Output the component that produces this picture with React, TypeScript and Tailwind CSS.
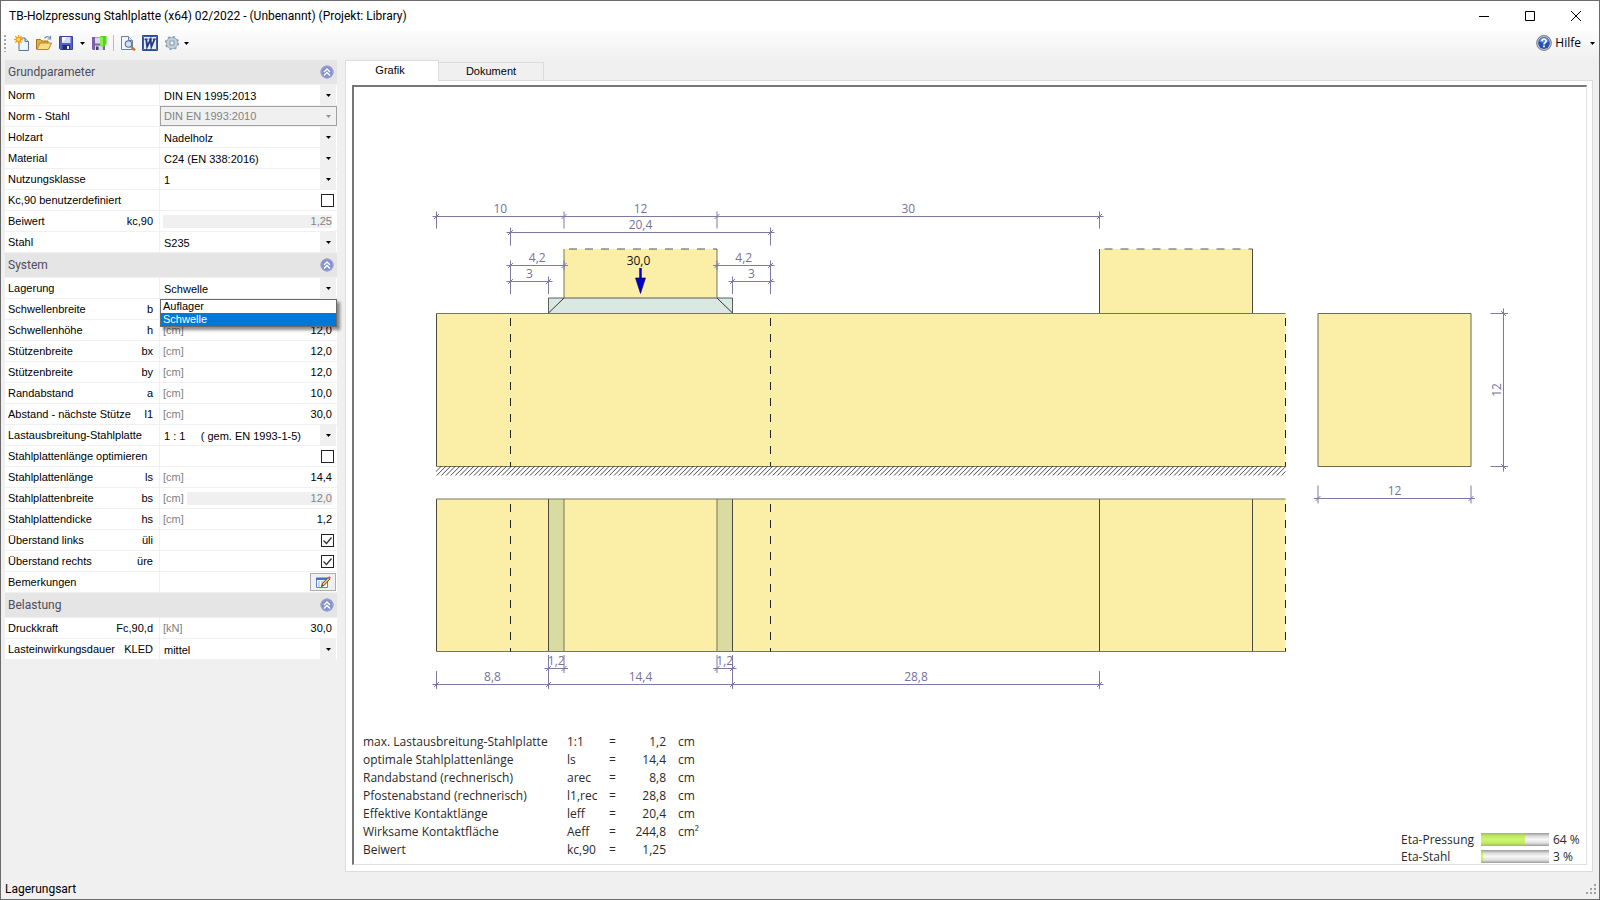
import { useState, type ReactNode } from "react";

type Field = {
  id: string;
  label: string;
  symbol?: string;
  unit?: string;
  kind: "select" | "check" | "number" | "note";
  value?: string;
  options?: string[];
  checked?: boolean;
  disabled?: boolean;
  open?: boolean;
};

type Section = { title: string; fields: Field[] };

const SECTIONS: Section[] = [
  {
    title: "Grundparameter",
    fields: [
      { id: "norm", label: "Norm", kind: "select", value: "DIN EN 1995:2013" },
      { id: "norm-stahl", label: "Norm - Stahl", kind: "select", value: "DIN EN 1993:2010", disabled: true },
      { id: "holzart", label: "Holzart", kind: "select", value: "Nadelholz" },
      { id: "material", label: "Material", kind: "select", value: "C24 (EN 338:2016)" },
      { id: "nutzung", label: "Nutzungsklasse", kind: "select", value: "1" },
      { id: "kc-user", label: "Kc,90 benutzerdefiniert", kind: "check" },
      { id: "beiwert", label: "Beiwert", symbol: "kc,90", kind: "number", value: "1,25", disabled: true },
      { id: "stahl", label: "Stahl", kind: "select", value: "S235" },
    ],
  },
  {
    title: "System",
    fields: [
      { id: "lagerung", label: "Lagerung", kind: "select", value: "Schwelle", options: ["Auflager", "Schwelle"], open: true },
      { id: "b", label: "Schwellenbreite", symbol: "b", unit: "[cm]", kind: "number", value: "12,0" },
      { id: "h", label: "Schwellenhöhe", symbol: "h", unit: "[cm]", kind: "number", value: "12,0" },
      { id: "bx", label: "Stützenbreite", symbol: "bx", unit: "[cm]", kind: "number", value: "12,0" },
      { id: "by", label: "Stützenbreite", symbol: "by", unit: "[cm]", kind: "number", value: "12,0" },
      { id: "a", label: "Randabstand", symbol: "a", unit: "[cm]", kind: "number", value: "10,0" },
      { id: "l1", label: "Abstand - nächste Stütze", symbol: "l1", unit: "[cm]", kind: "number", value: "30,0" },
      { id: "last", label: "Lastausbreitung-Stahlplatte", kind: "select", value: "1 : 1\u00a0\u00a0\u00a0\u00a0 ( gem. EN 1993-1-5)" },
      { id: "opt", label: "Stahlplattenlänge optimieren", kind: "check" },
      { id: "ls", label: "Stahlplattenlänge", symbol: "ls", unit: "[cm]", kind: "number", value: "14,4" },
      { id: "bs", label: "Stahlplattenbreite", symbol: "bs", unit: "[cm]", kind: "number", value: "12,0", disabled: true },
      { id: "hs", label: "Stahlplattendicke", symbol: "hs", unit: "[cm]", kind: "number", value: "1,2" },
      { id: "ueli", label: "Überstand links", symbol: "üli", kind: "check", checked: true },
      { id: "uere", label: "Überstand rechts", symbol: "üre", kind: "check", checked: true },
      { id: "bem", label: "Bemerkungen", kind: "note" },
    ],
  },
  {
    title: "Belastung",
    fields: [
      { id: "druck", label: "Druckkraft", symbol: "Fc,90,d", unit: "[kN]", kind: "number", value: "30,0" },
      { id: "kled", label: "Lasteinwirkungsdauer", symbol: "KLED", kind: "select", value: "mittel" },
    ],
  },
];

const RESULTS = [
  ["max. Lastausbreitung-Stahlplatte", "1:1", "1,2", "cm"],
  ["optimale Stahlplattenlänge", "ls", "14,4", "cm"],
  ["Randabstand (rechnerisch)", "arec", "8,8", "cm"],
  ["Pfostenabstand (rechnerisch)", "l1,rec", "28,8", "cm"],
  ["Effektive Kontaktlänge", "leff", "20,4", "cm"],
  ["Wirksame Kontaktfläche", "Aeff", "244,8", "cm²"],
  ["Beiwert", "kc,90", "1,25", ""],
];

function Caret({ className = "fill-black" }: { className?: string }) {
  return (
    <svg viewBox="0 0 5 3" className={"h-[3px] w-[5px] " + className} aria-hidden="true">
      <path d="M0 0h5L2.500 3z" />
    </svg>
  );
}

function SectionChevron() {
  return (
    <svg viewBox="0 0 14 14" className="size-3.5" aria-hidden="true">
      <circle cx="7" cy="7" r="6.500" fill="#8793cb" />
      <circle cx="7" cy="7" r="6" fill="none" stroke="#9aa4d6" />
      <path d="M4 7l3-3 3 3M4 10.500l3-3 3 3" fill="none" stroke="#fff" strokeWidth="1.400" />
    </svg>
  );
}

function NewIcon() {
  return (
    <svg viewBox="0 0 16 16" className="size-4" aria-hidden="true">
      <path d="M5 3h6l3.500 3.500v9H5z" fill="#eef4fc" stroke="#5d7496" />
      <path d="M11 3v3.500h3.500" fill="#cbd9ee" stroke="#5d7496" />
      <path d="M4.500 0v9M0 4.500h9M1.300 1.300l6.400 6.400M7.700 1.300L1.300 7.700" stroke="#f0a31c" strokeWidth="1.300" />
      <circle cx="4.500" cy="4.500" r="2.200" fill="#ffe14a" stroke="#e78a12" strokeWidth=".8" />
    </svg>
  );
}

function OpenIcon() {
  return (
    <svg viewBox="0 0 16 16" className="size-4" aria-hidden="true">
      <path d="M.5 14V4.500h4l1.500 1.500h6V14z" fill="#e2ad43" stroke="#a8761c" />
      <path d="M.8 14.500L4 8h11.500l-3 6.500z" fill="#fbdc84" stroke="#b5852c" />
      <path d="M8.500 3.500c1.500-2.300 4-2.300 5.500-.5M14.500.8V4h-3" fill="none" stroke="#7590b8" strokeWidth="1.200" />
    </svg>
  );
}

function SaveIcon() {
  return (
    <svg viewBox="0 0 16 16" className="size-4" aria-hidden="true">
      <path d="M1.500 1.500h13v13h-12l-1-1z" fill="#5660c4" stroke="#3a439c" />
      <path d="M4 2h8.500v6H4z" fill="#cfdcf4" />
      <path d="M4 2h5l-5 6z" fill="#fff" />
      <path d="M4.500 10h7.500v4.500H4.500z" fill="#252c66" />
      <path d="M9 11h2v3H9z" fill="#eef1fa" />
    </svg>
  );
}

function SaveCloseIcon() {
  return (
    <svg viewBox="0 0 16 16" className="size-4" aria-hidden="true">
      <path d="M1 2h13v13H2l-1-1z" fill="#7b61a8" />
      <path d="M4 2.500h7v6H4z" fill="#dcd9ee" />
      <path d="M4 10.500h8V15H4z" fill="#d9dbe2" />
      <path d="M5 11.500h2.500V15H5z" fill="#493b6c" />
      <path d="M9 1h6.500v8L12 12.500 9 10z" fill="#53d322" />
      <path d="M9 1l3 2v9.500L9 10z" fill="#8aef46" />
    </svg>
  );
}

function PreviewIcon() {
  return (
    <svg viewBox="0 0 16 16" className="size-4" aria-hidden="true">
      <path d="M1.500 1.500h7l4 4v9h-11z" fill="#f3f7fd" stroke="#6b83a8" />
      <path d="M8.500 1.500v4h4" fill="#d3dff1" stroke="#6b83a8" />
      <path d="M11.500 12l3.500 3.300" stroke="#b8762c" strokeWidth="2.400" />
      <circle cx="8.500" cy="9" r="3.300" fill="#c8e2f6" stroke="#5d6c82" strokeWidth="1.100" />
    </svg>
  );
}

function WordIcon() {
  return (
    <svg viewBox="0 0 16 16" className="size-4" aria-hidden="true">
      <path d="M.5.5h15v15H.5z" fill="#fff" stroke="#2b4a87" />
      <path d="M1.500 1.500h13v13h-13z" fill="#e6edf8" stroke="#3a5ea3" />
      <path d="M2.500 4.200h3.200M6.700 4.200h3M10.800 4.200h3" stroke="#1f3f80" strokeWidth="1.300" />
      <path d="M4.200 4l.9 7.600L8.600 4.500l.8 7.100L12.600 4" fill="none" stroke="#1f3f80" strokeWidth="1.900" />
    </svg>
  );
}

function GearIcon() {
  return (
    <svg viewBox="0 0 16 16" className="size-4" aria-hidden="true">
      <circle cx="8" cy="8" r="6.200" fill="none" stroke="#8ea0b2" strokeWidth="1.800" strokeDasharray="2.430 2.430" />
      <circle cx="8" cy="8" r="4.200" fill="none" stroke="#8fa2b5" strokeWidth="3.600" />
      <circle cx="8" cy="8" r="4.200" fill="none" stroke="#c3d1de" strokeWidth="2.200" />
      <circle cx="8" cy="8" r="2" fill="#f4f4f4" stroke="#8496a8" strokeWidth=".8" />
    </svg>
  );
}

function HelpIcon() {
  return (
    <svg viewBox="0 0 16 16" className="size-4" aria-hidden="true">
      <circle cx="8" cy="8" r="7.300" fill="#d4d6da" stroke="#85878c" strokeWidth="1.200" />
      <circle cx="8" cy="8" r="5.900" fill="#2450b8" />
      <path d="M3 6.500a5.100 5.100 0 0 1 10 0c-3 1.500-7 1.500-10 0z" fill="#5c86dc" />
      <path d="M5.900 6.300c0-2.900 4.300-2.800 4.300-.3C10.200 7.600 8 7.700 8 9.500" fill="none" stroke="#fff" strokeWidth="1.700" />
      <path d="M7.100 10.600h1.800v1.700H7.100z" fill="#fff" />
    </svg>
  );
}

function NoteIcon() {
  return (
    <svg viewBox="0 0 16 13" className="h-[13px] w-4" aria-hidden="true">
      <path d="M1.500 2.500h11v9h-11z" fill="#fff" stroke="#5a86cf" />
      <path d="M1 1.500h12v2.500H1z" fill="#3f74cf" />
      <path d="M3 6h2M3 8h2M3 10h2M6 6h4M6 8h2" stroke="#8fa9d6" />
      <path d="M6.500 10.500l1-3L13 1.500l1.800 1.700-5.500 6z" fill="#f2c45a" stroke="#4c4026" strokeWidth=".9" />
      <path d="M13 1.500L14.300.2l1.600 1.600-1.100 1.400z" fill="#c05a62" />
      <path d="M6.500 10.500l.5-1.600 1 1z" fill="#111" />
    </svg>
  );
}

function ToolButton({ label, className = "w-[22px]", children }: { label: string; className?: string; children: ReactNode }) {
  return (
    <button type="button" aria-label={label} title={label} className={"flex h-[22px] shrink-0 items-center justify-center " + className}>
      {children}
    </button>
  );
}

function TitleBar() {
  return (
    <header className="flex h-[30px] items-center bg-white">
      <h1 className="min-w-0 flex-1 truncate pl-2 text-[12px]">
        TB-Holzpressung Stahlplatte (x64) 02/2022 - (Unbenannt) (Projekt: Library)
      </h1>
      <ToolButton label="Minimieren" className="w-[46px]">
        <svg viewBox="0 0 10 10" className="size-2.5" aria-hidden="true">
          <path d="M0 5.500h10" stroke="#000" />
        </svg>
      </ToolButton>
      <ToolButton label="Maximieren" className="w-[46px]">
        <svg viewBox="0 0 10 10" className="size-2.5" aria-hidden="true">
          <path d="M.5.5h9v9h-9z" fill="none" stroke="#000" />
        </svg>
      </ToolButton>
      <ToolButton label="Schließen" className="w-[46px]">
        <svg viewBox="0 0 10 10" className="size-2.5" aria-hidden="true">
          <path d="M0 0l10 10M10 0L0 10" stroke="#000" />
        </svg>
      </ToolButton>
    </header>
  );
}

function Toolbar() {
  return (
    <div role="toolbar" className="flex h-[29px] items-start bg-gradient-to-b from-[#fcfcfc] to-[#f0f0f0] pt-px">
      <svg viewBox="0 0 10 22" className="h-[22px] w-2.5 shrink-0" aria-hidden="true">
        <path d="M4 3v17" stroke="#a8a8a8" strokeWidth="2" strokeDasharray="2 2" />
      </svg>
      <ToolButton label="Neu"><NewIcon /></ToolButton>
      <ToolButton label="Öffnen"><OpenIcon /></ToolButton>
      <ToolButton label="Speichern"><SaveIcon /></ToolButton>
      <ToolButton label="Speichern Optionen" className="w-[11px]"><Caret /></ToolButton>
      <ToolButton label="Speichern und schließen"><SaveCloseIcon /></ToolButton>
      <span className="mx-[3px] my-[3px] h-4 w-px bg-[#bdbdbd]" />
      <ToolButton label="Vorschau"><PreviewIcon /></ToolButton>
      <ToolButton label="Word"><WordIcon /></ToolButton>
      <ToolButton label="Einstellungen"><GearIcon /></ToolButton>
      <ToolButton label="Einstellungen Optionen" className="w-[7px]"><Caret /></ToolButton>
      <button type="button" className="ml-auto flex h-[22px] items-center gap-[3px] pr-1 font-['Open_Sans','Noto_Sans',sans-serif] text-[12px]">
        <HelpIcon />
        Hilfe
        <span className="ml-1.5"><Caret /></span>
      </button>
    </div>
  );
}

function FieldControl({ field }: { field: Field }) {
  const [open, setOpen] = useState(!!field.open);
  const [value, setValue] = useState(field.value ?? "");

  if (field.kind === "select") {
    return (
      <div className="relative h-5">
        <select
          id={field.id}
          value={value}
          disabled={field.disabled}
          onChange={(e) => setValue(e.target.value)}
          className="h-5 w-full appearance-none bg-white pt-0.5 pr-5 pl-1 outline-none disabled:border disabled:border-[#a0a0a0] disabled:bg-[#f0f0f0] disabled:pt-px disabled:pl-[3px] disabled:text-[#838383] disabled:opacity-100"
        >
          {(field.options ?? [value]).map((o) => (
            <option key={o}>{o}</option>
          ))}
        </select>
        <span className={"pointer-events-none absolute inset-y-0 right-px flex w-4 items-center justify-center " + (field.disabled ? "" : "bg-[#f0f0f0]")}>
          <Caret className={field.disabled ? "fill-[#909090]" : "fill-black"} />
        </span>
        {open && (
          <ul role="listbox" aria-label={field.label} className="absolute inset-x-0 top-full z-10 mt-px border border-[#6a6a6a] bg-white leading-[13px] shadow-[3px_3px_3px_rgba(0,0,0,0.45)]">
            {field.options?.map((o) => (
              <li
                key={o}
                role="option"
                aria-selected={o === value}
                onClick={() => {
                  setValue(o);
                  setOpen(false);
                }}
                className="pl-0.5 aria-selected:bg-[#0078d7] aria-selected:text-white"
              >
                {o}
              </li>
            ))}
          </ul>
        )}
      </div>
    );
  }

  if (field.kind === "check") {
    return (
      <div className="flex h-5 items-center justify-end pr-[3px]">
        <span className="relative size-[13px]">
          <input id={field.id} type="checkbox" defaultChecked={field.checked} className="peer block size-[13px] appearance-none border border-[#222] bg-white" />
          <svg viewBox="0 0 13 13" className="pointer-events-none absolute inset-0 hidden size-[13px] peer-checked:block" aria-hidden="true">
            <path d="M2.500 6.500l3 3 5-6" fill="none" stroke="#333" strokeWidth="1.300" />
          </svg>
        </span>
      </div>
    );
  }

  if (field.kind === "note") {
    return (
      <div className="flex h-5 items-center justify-end pr-px">
        <button id={field.id} type="button" className="flex h-[18px] w-[26px] items-center justify-center border border-[#adadad] bg-[#f0f0f0]">
          <NoteIcon />
        </button>
      </div>
    );
  }

  return (
    <div className="flex h-5 items-center gap-[3px] pr-[5px] pl-[3px]">
      {field.unit && <span className="text-[#808080]">{field.unit}</span>}
      <input
        id={field.id}
        type="text"
        defaultValue={field.value}
        readOnly={field.disabled}
        className="h-[13px] min-w-0 flex-1 bg-white text-right leading-[13px] outline-none read-only:bg-[#f0f0f0] read-only:text-[#838383]"
      />
    </div>
  );
}

function Sidebar() {
  return (
    <aside className="w-[332px] shrink-0 font-['Liberation_Sans',Arial,sans-serif] text-[11px]">
      {SECTIONS.map((section) => (
        <section key={section.title}>
          <div className="mb-px flex h-6 items-center justify-between bg-[#e5e5e5] pr-[3px] pl-[3px]">
            <h2 className="font-[Roboto,'Open_Sans',sans-serif] text-[12px] font-normal text-[#4c4c60]">{section.title}</h2>
            <button type="button" aria-label={section.title + " einklappen"}><SectionChevron /></button>
          </div>
          {section.fields.map((field) => (
            <div key={field.id} className="mb-px grid h-5 grid-cols-[154px_minmax(0,1fr)] gap-px">
              <label htmlFor={field.id} className="flex items-center justify-between bg-white pr-1.5 pl-[3px] whitespace-nowrap">
                <span>{field.label}</span>
                <span>{field.symbol}</span>
              </label>
              <div className="bg-white">
                <FieldControl field={field} />
              </div>
            </div>
          ))}
        </section>
      ))}
    </aside>
  );
}

/* Dimension chain along x: line at y, vertical ticks at each stop. */
function DimH({ y, stops, labels, top, bottom }: { y: number; stops: number[]; labels: string[]; top: number; bottom: number }) {
  return (
    <g>
      <path d={`M${stops[0] - 4} ${y}H${stops[stops.length - 1] + 4}`} />
      {stops.map((x) => (
        <path key={x} d={`M${x} ${top}V${bottom}M${x - 2.5} ${y + 2.5}l5 -5`} />
      ))}
      {labels.map((t, i) => (
        <text key={i} x={(stops[i] + stops[i + 1]) / 2} y={y - 3.5} textAnchor="middle" stroke="none">
          {t}
        </text>
      ))}
    </g>
  );
}

const HATCH = Array.from({ length: 184 }, (_, i) => `M${432 + i * 4.667} 475.500l9.500 -9.500`).join("");

function Drawing() {
  return (
    <svg viewBox="354 87 1232 640" className="h-auto w-full max-w-[1232px] font-['Open_Sans','Noto_Sans',sans-serif] text-[12px]" role="img" aria-label="Systemgrafik">
      <defs>
        <clipPath id="ground">
          <path d="M436 466h849.500v10H436z" />
        </clipPath>
      </defs>

      <g fill="#fbeea6">
        <path d="M564 249h153v49H564z" />
        <path d="M1099.500 249h153v64h-153z" />
        <path d="M436.500 313.500h849v153h-849z" />
        <path d="M436.500 499h849v152.500h-849z" />
        <path d="M1318 313.500h153v153h-153z" stroke="#6f6b55" />
      </g>
      <path d="M548.500 298h184v15.500h-184z" fill="#dbe7e2" stroke="#55605c" />
      <path d="M548.500 313l15.500-15M732.500 313L717 298" stroke="#333" fill="none" />
      <path d="M548.500 499H564v152.500h-15.500zM717 499h15.500v152.500H717z" fill="#d8dca0" />

      <g fill="none" stroke="#4b4a3c">
        <path d="M436.500 313.500v153M436.500 499v152.500M548.500 499v152.500M732.500 499v152.500M1099.500 249v64.500M1252.500 249v64.500M1099.500 499v152.500M1252.500 499v152.500" />
        <path d="M436.500 313.500h849M436.500 466.500h849M436.500 499h849M436.500 651.500h849" stroke="#77745f" />
        <path d="M564 249v49M717 249v49M564 499v152.500M717 499v152.500" stroke="#77745f" />
      </g>
      <g fill="none" stroke="#222" strokeDasharray="8 8" strokeDashoffset="11">
        <path d="M510.500 313v153.500M770.500 313v153.500M510.500 499v152.500M770.500 499v152.500M1285.500 313v153.500M1285.500 499v152.500" />
        <path d="M564 249h153M1099.500 249h153" stroke="#555" />
      </g>
      <path d={HATCH} clipPath="url(#ground)" stroke="#333" strokeWidth=".9" />

      <path d="M640.500 268v12" stroke="#0000d0" strokeWidth="2.500" />
      <path d="M635.500 278h10l-5 15.500z" fill="#0000d0" stroke="#000060" strokeWidth=".6" />
      <text x="638.500" y="265" textAnchor="middle" fill="#111">30,0</text>

      <g fill="#76729c" stroke="#7c79a3">
        <DimH y={216.5} stops={[436.5, 564, 717, 1099.5]} labels={["10", "12", "30"]} top={211.5} bottom={228.5} />
        <DimH y={232.5} stops={[510.5, 770.5]} labels={["20,4"]} top={227.5} bottom={245.5} />
        <DimH y={265.5} stops={[510.5, 564]} labels={["4,2"]} top={260.5} bottom={270} />
        <DimH y={281.5} stops={[510.5, 548.5]} labels={["3"]} top={276.5} bottom={294} />
        <DimH y={265.5} stops={[717, 770.5]} labels={["4,2"]} top={260.5} bottom={270} />
        <DimH y={281.5} stops={[732.5, 770.5]} labels={["3"]} top={276.5} bottom={294} />
        <path d="M510.500 261v33M770.500 261v33" />
        <DimH y={668.5} stops={[548.5, 564]} labels={["1,2"]} top={655} bottom={673} />
        <DimH y={668.5} stops={[717, 732.5]} labels={["1,2"]} top={655} bottom={673} />
        <DimH y={684.5} stops={[436.5, 548.5, 732.5, 1099.5]} labels={["8,8", "14,4", "28,8"]} top={671} bottom={689} />
        <DimH y={498.5} stops={[1318, 1471]} labels={["12"]} top={485.5} bottom={503.5} />
        <path d="M1503.500 308.500v163M1490.500 313.500h17.500M1490.500 466.500h17.500M1501 311l5 5M1501 464l5 5" />
        <text transform="translate(1501 390) rotate(-90)" textAnchor="middle" stroke="none">12</text>
      </g>
    </svg>
  );
}

function EtaRow({ label, percent }: { label: string; percent: number }) {
  return (
    <div className="grid h-[17px] grid-cols-[80px_68px_32px] items-end leading-[15px]">
      <span>{label}</span>
      <div
        role="progressbar"
        aria-label={label}
        aria-valuenow={percent}
        className="mb-px h-[13px] bg-[linear-gradient(#9a9a9a,#dedede_25%,#f8f8f8_50%,#dedede_78%,#9a9a9a)]"
      >
        <div className="h-full bg-[linear-gradient(#9fb86a,#c0ea66_25%,#cdf670_50%,#c0ea66_78%,#9fb86a)]" style={{ width: `${percent}%` }} />
      </div>
      <span className="pl-1 whitespace-nowrap">{percent} %</span>
    </div>
  );
}

function Workspace() {
  return (
    <main className="flex min-w-0 flex-1 flex-col">
      <div role="tablist" className="flex items-end font-['Liberation_Sans',Arial,sans-serif] text-[11px]">
        <button role="tab" aria-selected="true" type="button" className="z-10 -mb-px h-[21px] w-[94px] border border-b-0 border-[#dcdcdc] bg-white pr-1 pb-0.5">
          Grafik
        </button>
        <button role="tab" aria-selected="false" type="button" className="h-[18px] w-[105px] border border-b-0 border-l-0 border-[#dcdcdc] bg-[#f0f0f0]">
          Dokument
        </button>
      </div>
      <div className="flex flex-1 flex-col border border-[#dcdcdc] bg-white pt-1 pr-[5px] pb-1.5 pl-1.5">
        <div className="flex flex-1 flex-col border-t-2 border-r border-b border-l-2 border-t-[#777] border-r-[#e0e0e0] border-b-[#e0e0e0] border-l-[#777]">
          <Drawing />
          <div className="mt-auto flex items-end justify-between font-['Open_Sans','Noto_Sans',sans-serif] text-[12px] text-[#2a2a2a]">
            <table className="mb-[5px] ml-[9px] leading-[18px] whitespace-nowrap">
              <tbody>
                {RESULTS.map(([name, symbol, value, unit]) => (
                  <tr key={name} className="h-[18px]">
                    <th scope="row" className="w-[204px] p-0 text-left font-normal">{name}</th>
                    <td className="w-[42px] p-0">{symbol}</td>
                    <td className="w-3 p-0">=</td>
                    <td className="w-[45px] p-0 text-right">{value}</td>
                    <td className="p-0 pl-3">{unit}</td>
                  </tr>
                ))}
              </tbody>
            </table>
            <div className="pr-[5px]">
              <EtaRow label="Eta-Pressung" percent={64} />
              <EtaRow label="Eta-Stahl" percent={3} />
            </div>
          </div>
        </div>
      </div>
    </main>
  );
}

export default function App() {
  return (
    <div className="flex min-h-screen flex-col border border-[#6b6b6b] bg-[#f0f0f0] font-[Roboto,'Open_Sans',sans-serif] text-black">
      <TitleBar />
      <Toolbar />
      <div className="flex flex-1 gap-2 pr-1.5 pl-1">
        <Sidebar />
        <Workspace />
      </div>
      <footer className="flex h-[27px] items-center justify-between pt-1.5 pl-1 text-[12px]">
        <span>Lagerungsart</span>
        <svg viewBox="0 0 12 12" className="mr-0.5 size-3" aria-hidden="true" fill="#a0a0a0">
          <path d="M9 1h2v2H9zM5 5h2v2H5zM9 5h2v2H9zM1 9h2v2H1zM5 9h2v2H5zM9 9h2v2H9z" />
        </svg>
      </footer>
    </div>
  );
}
